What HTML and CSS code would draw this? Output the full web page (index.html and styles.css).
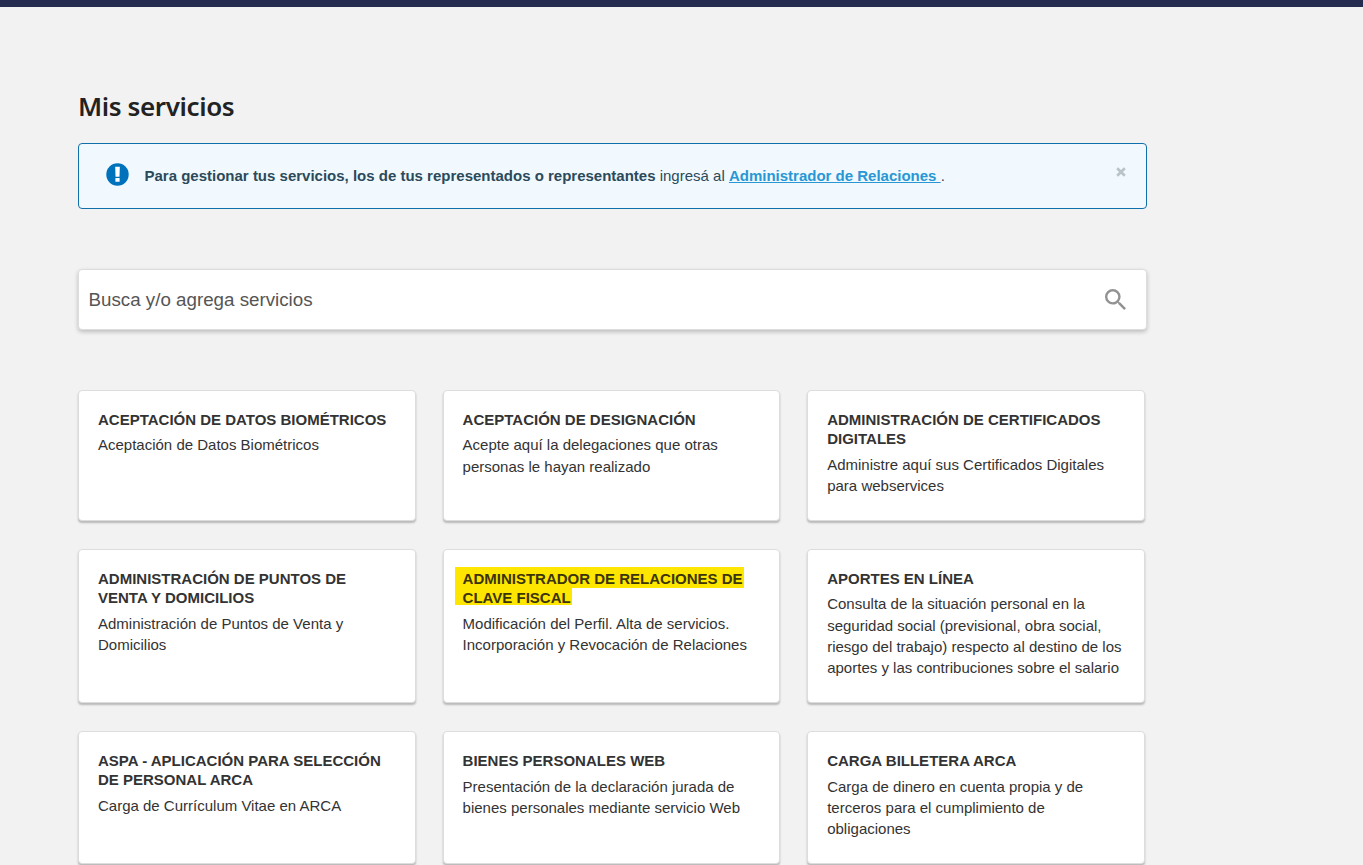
FILE: index.html
```html
<!DOCTYPE html>
<html lang="es">
<head>
<meta charset="utf-8">
<title>Mis servicios</title>
<link rel="stylesheet" href="styles.css">
</head>
<body>
<div class="topbar"></div>
<main class="page">
  <h1 class="page-title">Mis servicios</h1>
  <div class="notice">
    <svg class="notice-icon" viewBox="0 0 23 23" aria-hidden="true"><circle cx="11.5" cy="11.5" r="11.2" fill="#0072bb"/><path d="M9.2 3.7h4.6l-.3 10.1h-4z" fill="#fff"/><rect x="9.4" y="15.1" width="4.2" height="3.6" rx=".5" fill="#fff"/></svg>
    <p class="notice-text"><strong>Para gestionar tus servicios, los de tus representados o representantes</strong> ingresá al <a class="notice-link" href="#">Administrador de Relaciones&nbsp;</a>.</p>
    <button class="notice-close" aria-label="Cerrar"><svg class="close-icon" viewBox="0 0 10 10"><path d="M1.2 1.2l7.6 7.6M8.8 1.2L1.2 8.8" stroke="#bac3c7" stroke-width="2.7"/></svg></button>
  </div>
  <div class="search">
    <span class="search-label">Busca y/o agrega servicios</span>
    <svg class="search-icon" viewBox="3 3 17.49 17.49"><path fill="#929292" d="M15.5 14h-.79l-.28-.27A6.471 6.471 0 0 0 16 9.5 6.5 6.5 0 1 0 9.5 16c1.61 0 3.09-.59 4.23-1.57l.27.28v.79l5 4.99L20.49 19l-4.99-5zm-6 0C7.01 14 5 11.99 5 9.5S7.01 5 9.5 5 14 7.01 14 9.5 11.99 14 9.5 14z"/></svg>
  </div>
  <section class="services">
    <article class="card"><h2 class="card-title">ACEPTACIÓN DE DATOS BIOMÉTRICOS</h2><p class="card-text">Aceptación de Datos Biométricos</p></article>
    <article class="card"><h2 class="card-title">ACEPTACIÓN DE DESIGNACIÓN</h2><p class="card-text">Acepte aquí la delegaciones que otras<br>personas le hayan realizado</p></article>
    <article class="card"><h2 class="card-title">ADMINISTRACIÓN DE CERTIFICADOS<br>DIGITALES</h2><p class="card-text">Administre aquí sus Certificados Digitales<br>para webservices</p></article>
    <article class="card"><h2 class="card-title">ADMINISTRACIÓN DE PUNTOS DE<br>VENTA Y DOMICILIOS</h2><p class="card-text">Administración de Puntos de Venta y<br>Domicilios</p></article>
    <article class="card"><h2 class="card-title marked"><span class="mark mark-first">ADMINISTRADOR DE RELACIONES DE</span><span class="mark mark-last">CLAVE FISCAL</span></h2><p class="card-text">Modificación del Perfil. Alta de servicios.<br>Incorporación y Revocación de Relaciones</p></article>
    <article class="card"><h2 class="card-title">APORTES EN LÍNEA</h2><p class="card-text">Consulta de la situación personal en la<br>seguridad social (previsional, obra social,<br>riesgo del trabajo) respecto al destino de los<br>aportes y las contribuciones sobre el salario</p></article>
    <article class="card"><h2 class="card-title">ASPA - APLICACIÓN PARA SELECCIÓN<br>DE PERSONAL ARCA</h2><p class="card-text">Carga de Currículum Vitae en ARCA</p></article>
    <article class="card"><h2 class="card-title">BIENES PERSONALES WEB</h2><p class="card-text">Presentación de la declaración jurada de<br>bienes personales mediante servicio Web</p></article>
    <article class="card"><h2 class="card-title">CARGA BILLETERA ARCA</h2><p class="card-text">Carga de dinero en cuenta propia y de<br>terceros para el cumplimiento de<br>obligaciones</p></article>
  </section>
</main>
</body>
</html>
```
FILE: styles.css
```css
* { box-sizing: border-box; }
body {
  margin: 0;
  height: 865px;
  overflow: hidden;
  background: #f2f2f2;
  color: #333;
  font-family: "Liberation Sans", Arial, sans-serif;
  font-size: 15px;
}
.topbar { height: 7px; background: #242c4f; }
.page { width: 1069px; margin-left: 78px; padding-top: 82px; }
.page-title {
  margin: 0 0 19px;
  color: #222;
  font: 600 26px/35px "Noto Sans", "Open Sans", sans-serif;
  letter-spacing: -.38px;
  white-space: nowrap;
}
.notice {
  display: flex;
  height: 66px;
  padding: 0 20px 0 26.5px;
  border: 1px solid #1070ab;
  border-radius: 4px;
  background: #f1f9ff;
  color: #2b4a5a;
}
.notice-icon { width: 23px; height: 23px; margin-top: 19px; }
.notice-text { flex: 1; margin: 0 0 0 16px; line-height: 64px; white-space: nowrap; }
.notice-link { color: #2897d4; font-weight: bold; text-underline-offset: 1px; }
.notice-close { width: 10px; height: 10px; margin-top: 23px; padding: 0; border: 0; background: none; display: flex; }
.close-icon { width: 10px; height: 10px; }
.search {
  display: flex;
  align-items: center;
  justify-content: space-between;
  height: 61px;
  margin-top: 60px;
  padding: 0 20px 0 9.5px;
  border: 1px solid #ddd;
  border-radius: 4px;
  background: #fff;
  box-shadow: 0 2px 4px rgba(0, 0, 0, .22);
}
.search-label { color: #555; font-size: 18.75px; }
.search-icon { width: 21px; height: 21px; }
.services {
  display: grid;
  grid-template-columns: repeat(3, 337.5px);
  gap: 27.8px 27.1px;
  margin-top: 60px;
}
.card {
  padding: 19px 19px 23.4px;
  border: 1px solid #ddd;
  border-radius: 4px;
  background: #fff;
  box-shadow: 0 2px 2px rgba(0, 0, 0, .24);
}
.card-title { margin: 0 0 5.2px; font-size: 15px; line-height: 19.3px; white-space: nowrap; }
.card-text { margin: 0; line-height: 21.4px; white-space: nowrap; }
.marked { display: flex; flex-direction: column; align-items: flex-start; }
.mark { margin-left: -8px; padding: 0 1px 0 8px; background: #ffe600; color: #3a3408; }
.mark-first { margin-top: -2px; padding-top: 2px; }
.mark-last { height: 17px; margin-bottom: 2.3px; }
```
